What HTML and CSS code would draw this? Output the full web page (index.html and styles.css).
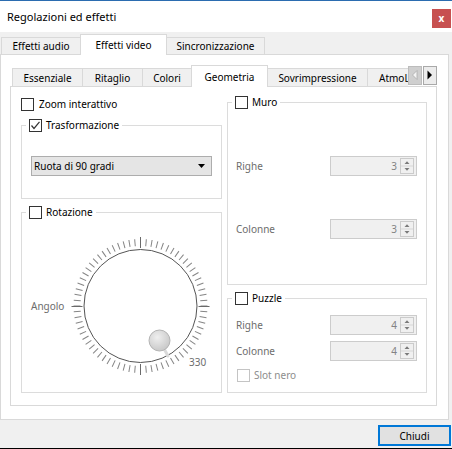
FILE: index.html
```html
<!DOCTYPE html>
<html lang="it">
<head>
<meta charset="utf-8">
<title>Regolazioni ed effetti</title>
<link rel="stylesheet" href="styles.css">
</head>
<body>
<div class="win">
  <div class="topline"></div>
  <div class="titlebar">
    <span class="title">Regolazioni ed effetti</span>
    <span class="close">x</span>
  </div>

  <div class="otabs">
    <div class="otab w-audio">Effetti audio</div>
    <div class="otab sel w-video">Effetti video</div>
    <div class="otab w-sync">Sincronizzazione</div>
  </div>

  <div class="opane">
    <div class="itabbar">
      <div class="itabs">
        <div class="itab w-ess">Essenziale</div>
        <div class="itab w-rit">Ritaglio</div>
        <div class="itab w-col">Colori</div>
        <div class="itab sel w-geo">Geometria</div>
        <div class="itab w-sov">Sovrimpressione</div>
        <div class="itab w-atm">AtmoLight</div>
      </div>
      <svg class="sbtn" width="14" height="19" viewBox="0 0 14 19">
        <rect x="0.5" y="0.5" width="13" height="18" fill="#cfcfcf" stroke="#bcbcbc"/>
        <polygon points="9,4.5 9,13.5 4.5,9" fill="#f4f4f4" stroke="#a9a9a9" stroke-width="0.8"/>
      </svg>
      <svg class="sbtn r" width="14" height="19" viewBox="0 0 14 19">
        <rect x="0.5" y="0.5" width="13" height="18" fill="#ececec" stroke="#a9a9a9"/>
        <polygon points="4.5,4.5 4.5,13.5 9,9" fill="#000"/>
      </svg>
    </div>

    <div class="ipane">
      <div class="col lcol">
        <div class="check zoomrow"><span class="cb"></span><span>Zoom interattivo</span></div>

        <fieldset class="group g-trasf">
          <legend><span class="lg"><span class="cb"><svg width="11" height="11" viewBox="0 0 11 11"><polyline points="1.5,5.5 4,8.5 9.5,1.8" fill="none" stroke="#333" stroke-width="1.2"/></svg></span><span>Trasformazione</span></span></legend>
          <div class="gbody trasf-body">
            <div class="combo"><span>Ruota di 90 gradi</span><svg width="7" height="4" viewBox="0 0 7 4"><polygon points="0,0 7,0 3.5,4" fill="#000"/></svg></div>
          </div>
        </fieldset>

        <fieldset class="group g-rot">
          <legend><span class="lg"><span class="cb"></span><span>Rotazione</span></span></legend>
          <div class="gbody dialrow">
            <span class="dim angolo">Angolo</span>
            <svg class="dial" width="150" height="150" viewBox="0 0 150 150">
              <defs>
                <g id="tk">
                  <line x1="75.5" y1="8" x2="75.5" y2="15"/>
                  <line x1="75.5" y1="8" x2="75.5" y2="15" transform="rotate(5 75.5 75)"/>
                  <line x1="75.5" y1="8" x2="75.5" y2="15" transform="rotate(10 75.5 75)"/>
                  <line x1="75.5" y1="8" x2="75.5" y2="15" transform="rotate(15 75.5 75)"/>
                  <line x1="75.5" y1="8" x2="75.5" y2="15" transform="rotate(20 75.5 75)"/>
                  <line x1="75.5" y1="8" x2="75.5" y2="15" transform="rotate(25 75.5 75)"/>
                </g>
                <radialGradient id="kg" cx="40%" cy="35%" r="70%">
                  <stop offset="0" stop-color="#efefef"/>
                  <stop offset="1" stop-color="#c6c6c6"/>
                </radialGradient>
              </defs>
              <g stroke="#858585" stroke-width="1">
                <use href="#tk"/>
                <use href="#tk" transform="rotate(30 75.5 75)"/>
                <use href="#tk" transform="rotate(60 75.5 75)"/>
                <use href="#tk" transform="rotate(90 75.5 75)"/>
                <use href="#tk" transform="rotate(120 75.5 75)"/>
                <use href="#tk" transform="rotate(150 75.5 75)"/>
                <use href="#tk" transform="rotate(180 75.5 75)"/>
                <use href="#tk" transform="rotate(210 75.5 75)"/>
                <use href="#tk" transform="rotate(240 75.5 75)"/>
                <use href="#tk" transform="rotate(270 75.5 75)"/>
                <use href="#tk" transform="rotate(300 75.5 75)"/>
                <use href="#tk" transform="rotate(330 75.5 75)"/>
              </g>
              <g stroke="#6a6a6a" stroke-width="1">
                <line x1="75.5" y1="6" x2="75.5" y2="17"/>
                <line x1="75.5" y1="133" x2="75.5" y2="144"/>
                <line x1="6.5" y1="75.5" x2="17.5" y2="75.5"/>
                <line x1="133.5" y1="75.5" x2="144.5" y2="75.5"/>
              </g>
              <circle cx="75.5" cy="75" r="56.5" fill="#fff" stroke="#555" stroke-width="1"/>
              <line x1="99.6" y1="118.8" x2="103" y2="124.9" stroke="#dadada" stroke-width="3" stroke-linecap="round"/>
              <circle cx="94.5" cy="109.5" r="10.5" fill="url(#kg)" stroke="#b3b3b3"/>
              <text class="dialval" x="124" y="135">330</text>
            </svg>
          </div>
        </fieldset>
      </div>

      <div class="col rcol">
        <fieldset class="group g-muro">
          <legend><span class="lg"><span class="cb"></span><span>Muro</span></span></legend>
          <div class="gbody muro-body">
            <div class="srow">
              <span class="dim">Righe</span>
              <div class="spin"><span class="val">3</span>
                <svg width="14" height="16" viewBox="0 0 14 16"><rect x="0.5" y="0.5" width="13" height="15" fill="#f0f0f0" stroke="#cbcbcb"/><line x1="1" y1="8" x2="13" y2="8" stroke="#d6d6d6"/><polygon points="4.5,6 9.5,6 7,3.3" fill="#7a7a7a"/><polygon points="4.5,10 9.5,10 7,12.7" fill="#7a7a7a"/></svg>
              </div>
            </div>
            <div class="srow r2">
              <span class="dim">Colonne</span>
              <div class="spin"><span class="val">3</span>
                <svg width="14" height="16" viewBox="0 0 14 16"><rect x="0.5" y="0.5" width="13" height="15" fill="#f0f0f0" stroke="#cbcbcb"/><line x1="1" y1="8" x2="13" y2="8" stroke="#d6d6d6"/><polygon points="4.5,6 9.5,6 7,3.3" fill="#7a7a7a"/><polygon points="4.5,10 9.5,10 7,12.7" fill="#7a7a7a"/></svg>
              </div>
            </div>
          </div>
        </fieldset>

        <fieldset class="group g-puzzle">
          <legend><span class="lg"><span class="cb"></span><span>Puzzle</span></span></legend>
          <div class="gbody puzzle-body">
            <div class="srow">
              <span class="dim">Righe</span>
              <div class="spin"><span class="val">4</span>
                <svg width="14" height="16" viewBox="0 0 14 16"><rect x="0.5" y="0.5" width="13" height="15" fill="#f0f0f0" stroke="#cbcbcb"/><line x1="1" y1="8" x2="13" y2="8" stroke="#d6d6d6"/><polygon points="4.5,6 9.5,6 7,3.3" fill="#7a7a7a"/><polygon points="4.5,10 9.5,10 7,12.7" fill="#7a7a7a"/></svg>
              </div>
            </div>
            <div class="srow p2">
              <span class="dim">Colonne</span>
              <div class="spin"><span class="val">4</span>
                <svg width="14" height="16" viewBox="0 0 14 16"><rect x="0.5" y="0.5" width="13" height="15" fill="#f0f0f0" stroke="#cbcbcb"/><line x1="1" y1="8" x2="13" y2="8" stroke="#d6d6d6"/><polygon points="4.5,6 9.5,6 7,3.3" fill="#7a7a7a"/><polygon points="4.5,10 9.5,10 7,12.7" fill="#7a7a7a"/></svg>
              </div>
            </div>
            <div class="check slot"><span class="cb dis"></span><span class="dis-text">Slot nero</span></div>
          </div>
        </fieldset>
      </div>
    </div>
  </div>

  <div class="footer">
    <div class="btn">Chiudi</div>
  </div>
</div>
</body>
</html>
```

FILE: styles.css
```css
* { box-sizing: border-box; }
html, body { margin: 0; padding: 0; }
body {
  width: 452px;
  height: 449px;
  overflow: hidden;
  background: #f0f0f0;
  font-family: "Noto Sans", "Open Sans", sans-serif;
  font-size: 10px;
  color: #000;
}
.win {
  width: 452px;
  height: 449px;
  display: flex;
  flex-direction: column;
  border-bottom: 1px solid #000;
}
.topline { height: 1px; background: #2b6cb0; flex-shrink: 0; }
.titlebar {
  height: 31px;
  flex-shrink: 0;
  background: #fff;
  display: flex;
  align-items: center;
  padding-left: 7px;
}
.title { font-size: 11px; }
.close {
  margin-left: auto;
  margin-right: 1px;
  align-self: flex-start;
  margin-top: 8px;
  width: 19px;
  height: 19px;
  background: #c75050;
  color: #fff;
  font-weight: bold;
  font-size: 10px;
  display: flex;
  align-items: center;
  justify-content: center;
  line-height: 1;
  padding-bottom: 2px;
}

/* outer tabs */
.otabs {
  margin-top: 2px;
  height: 21px;
  margin-bottom: -1px;
  display: flex;
  align-items: flex-end;
  position: relative;
  z-index: 1;
  flex-shrink: 0;
}
.otab, .itab {
  border: 1px solid #d9d9d9;
  border-bottom: none;
  background: #f0f0f0;
  display: flex;
  align-items: center;
  justify-content: center;
  white-space: nowrap;
  margin-left: -1px;
  flex-shrink: 0;
}
.otab { height: 17px; margin-bottom: 1px; }
.otab.sel, .itab.sel {
  background: #fff;
  margin-bottom: 0;
  position: relative;
  z-index: 2;
}
.otab.sel { height: 21px; }
.w-audio { width: 80px; margin-left: 1px; }
.w-video { width: 87px; }
.w-sync { width: 99px; }

.opane {
  width: 449px;
  height: 366px;
  flex-shrink: 0;
  background: #fff;
  border: 1px solid #d9d9d9;
  padding: 10px 11px 13px 9px;
}

/* inner tabs */
.itabbar {
  height: 22px;
  margin-bottom: -1px;
  display: flex;
  align-items: flex-start;
  position: relative;
  z-index: 1;
}
.itabs {
  width: 398px;
  height: 22px;
  padding-left: 2px;
  display: flex;
  align-items: flex-end;
  overflow: hidden;
  flex-shrink: 0;
}
.itab { height: 18px; margin-bottom: 1px; }
.itab.sel { height: 22px; }
.w-ess { width: 71px; margin-left: 0; }
.w-rit { width: 61px; }
.w-col { width: 50px; }
.w-geo { width: 77px; }
.w-sov { width: 101px; }
.w-atm { width: 79px; justify-content: flex-start; padding-left: 11px; }
.sbtn { display: block; margin-top: 1px; flex-shrink: 0; }
.sbtn.r { margin-left: 1px; }

.ipane {
  height: 320px;
  border: 1px solid #d9d9d9;
  background: #fff;
  display: flex;
  gap: 5px;
  padding: 0 9px 0 10px;
}
.col { display: flex; flex-direction: column; }
.lcol { width: 201px; }
.rcol { width: 200px; }

.check { display: flex; align-items: center; gap: 5px; height: 13px; line-height: 13px; }
.zoomrow { margin-top: 11px; }

.cb {
  width: 13px;
  height: 13px;
  border: 1px solid #333;
  background: #fff;
  flex-shrink: 0;
  display: block;
}
.cb svg { display: block; }
.cb.dis { border-color: #c4c4c4; }
.dis-text { color: #8d8d8d; }
.dim { color: #6d6d6d; }

.group {
  margin: 0;
  padding: 0;
  min-width: 0;
  border: 1px solid #dcdcdc;
}
.group legend {
  margin-left: 4px;
  padding: 0 3px;
  height: 13px;
  line-height: 13px;
}
.lg { display: flex; align-items: center; gap: 4px; height: 13px; }

.g-trasf { margin-top: 8px; }
.trasf-body { padding: 24px 9px 22px 9px; }
.combo {
  height: 20px;
  border: 1px solid #adadad;
  background: #e5e5e5;
  display: flex;
  align-items: center;
  justify-content: space-between;
  padding: 0 6px 0 2px;
}
.combo svg { display: block; }

.g-rot { margin-top: 7px; }
.dialrow {
  display: flex;
  align-items: center;
  padding: 12px 0 11px 9px;
}
.angolo { width: 34px; flex-shrink: 0; }
.dial { display: block; flex-shrink: 0; }
.dialval {
  font-family: "Noto Sans", "Open Sans", sans-serif;
  font-size: 10px;
  fill: #6d6d6d;
}

.g-muro { margin-top: 9px; }
.muro-body { padding: 47px 9px 45px 8px; }
.srow {
  height: 20px;
  display: flex;
  align-items: center;
  justify-content: space-between;
}
.muro-body .r2 { margin-top: 43px; }
.spin {
  width: 87px;
  height: 20px;
  border: 1px solid #cccccc;
  background: #f0f0f0;
  display: flex;
  align-items: center;
  justify-content: flex-end;
  padding-right: 2px;
}
.spin svg { display: block; }
.val { color: #838383; margin-right: 3px; }

.g-puzzle { margin-top: 7px; }
.puzzle-body { padding: 10px 9px 10px 8px; }
.puzzle-body .p2 { margin-top: 6px; }
.slot { margin-top: 8px; margin-left: 1px; gap: 4px; }

.footer {
  height: 28px;
  flex-shrink: 0;
  display: flex;
  align-items: flex-start;
  padding-top: 5px;
}
.btn {
  margin-left: auto;
  margin-right: 1px;
  width: 73px;
  height: 21px;
  border: 2px solid #0078d7;
  background: #e1e1e1;
  display: flex;
  align-items: center;
  justify-content: center;
}
```
